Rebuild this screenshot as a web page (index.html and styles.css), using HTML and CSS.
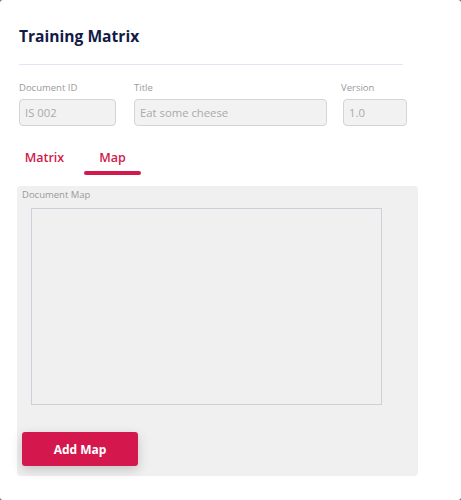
FILE: index.html
```html
<!DOCTYPE html>
<html>
<head>
<meta charset="utf-8">
<link rel="stylesheet" href="styles.css">
</head>
<body>
<div class="modal">
  <h1 class="title">Training Matrix</h1>
  <div class="divider"></div>
  <div class="fields">
    <div class="field f-id">
      <label>Document ID</label>
      <div class="input">IS 002</div>
    </div>
    <div class="field f-title">
      <label>Title</label>
      <div class="input">Eat some cheese</div>
    </div>
    <div class="field f-ver">
      <label>Version</label>
      <div class="input">1.0</div>
    </div>
  </div>
  <div class="tabs">
    <div class="tab">Matrix</div>
    <div class="tab active">Map</div>
  </div>
  <div class="panel">
    <div class="panel-label">Document Map</div>
    <div class="map-box"></div>
    <button class="btn">Add Map</button>
  </div>
</div>
</body>
</html>
```
FILE: styles.css
```css
html, body {
  margin: 0;
  padding: 0;
}
body {
  background: #6b6b6b;
  font-family: "Open Sans", "Noto Sans", sans-serif;
  width: 461px;
  height: 500px;
  overflow: hidden;
}
.modal {
  background: #fff;
  width: 461px;
  height: 500px;
  border-radius: 3px;
  box-sizing: border-box;
  padding: 25px 0 0 19px;
}
.title {
  margin: 0;
  font-size: 15.6px;
  font-weight: 700;
  color: #121a45;
  line-height: 22px;
}
.divider {
  width: 384px;
  height: 1px;
  background: #e2e5f5;
  margin-top: 17px;
}
.fields {
  display: flex;
  margin-top: 16px;
}
.field label {
  display: block;
  font-size: 9.5px;
  color: #9a9a9a;
  line-height: 14px;
  height: 14px;
}
.input {
  margin-top: 4px;
  box-sizing: border-box;
  height: 27px;
  border: 1px solid #d4d4d4;
  border-radius: 4px;
  background: #f2f2f2;
  color: #aaa;
  font-size: 11.3px;
  line-height: 25px;
  padding-left: 5px;
}
.f-id { width: 97px; }
.f-title { width: 193px; margin-left: 18px; }
.f-ver { width: 66px; margin-left: 14px; }
.f-ver .input { margin-left: 2px; }
.tabs {
  display: flex;
  margin-top: 23px;
  height: 26px;
}
.tab {
  position: relative;
  color: #d01a4c;
  font-size: 12.5px;
  font-weight: 600;
  line-height: 18px;
  text-align: center;
  width: 57px;
}
.tab:first-child { margin-left: -3px; }
.tab + .tab { margin-left: 11px; }
.tab.active::after {
  content: "";
  position: absolute;
  left: 0;
  right: 0;
  top: 22px;
  height: 3.5px;
  border-radius: 2px;
  background: #d01a4c;
}
.panel {
  margin-top: 11px;
  margin-left: -2px;
  width: 401px;
  height: 290px;
  background: #f0f0f0;
  border-radius: 4px;
  box-sizing: border-box;
  padding: 2px 0 0 5px;
}
.panel-label {
  font-size: 9.5px;
  color: #9a9a9a;
  line-height: 13px;
}
.map-box {
  margin: 7px 0 0 9px;
  width: 351px;
  height: 197px;
  box-sizing: border-box;
  border: 1px solid #cfcfd9;
}
.btn {
  display: block;
  margin-top: 27px;
  width: 116px;
  height: 34px;
  border: none;
  border-radius: 3px;
  background: #d4184e;
  color: #fff;
  font-family: "Open Sans", "Noto Sans", sans-serif;
  font-size: 12px;
  font-weight: 700;
  box-shadow: 0 4px 12px rgba(0,0,0,0.18);
  padding: 0;
}
```
